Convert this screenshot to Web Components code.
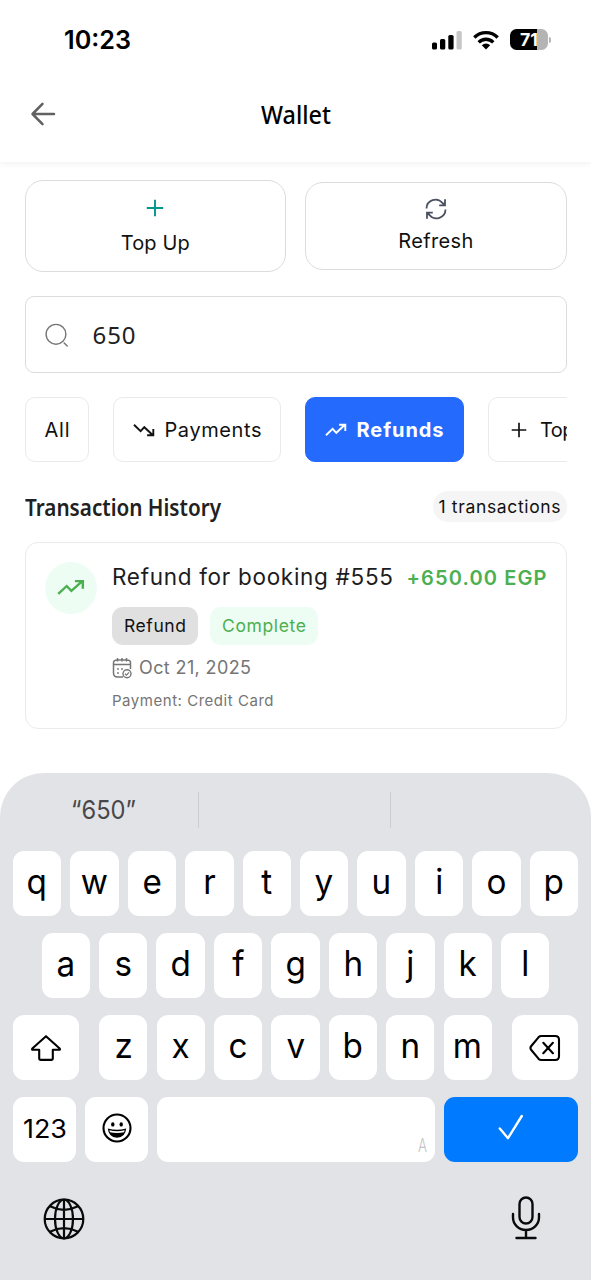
<!DOCTYPE html>
<html lang="en">
<head>
<meta charset="utf-8">
<title>Wallet</title>
<style>
html,body{margin:0;padding:0}
body{width:591px;height:1280px;overflow:hidden;background:#fff;font-family:Inter,"Liberation Sans",sans-serif;color:#111}
</style>
</head>
<body>
<wallet-app></wallet-app>
<script>
const define=(name,html,setup)=>customElements.define(name,class extends HTMLElement{
  constructor(){super();this.attachShadow({mode:'open'});}
  connectedCallback(){
    this.shadowRoot.innerHTML=typeof html==='function'?html(this):html;
    if(setup)setup(this,this.shadowRoot);
  }
});

/* Icon set. Each entry: view box size and drawing. */
const ICONS={
  back:[26,24,'<path d="M24 12H2.500M12.500 1.800L2.500 12l10 10.200" stroke="currentColor" stroke-width="2.500" stroke-linecap="round" stroke-linejoin="round"/>'],
  plus:[18,18,'<path d="M9 .8v16.400M.8 9h16.400" stroke="currentColor" stroke-width="1.900"/>'],
  refresh:[22,22,'<path d="M1.500 10.500A9 9 0 0 1 17.500 5l2.300 2M20 1.300v6h-5.800M20.500 11.500A9 9 0 0 1 4.500 17l-2.300-2M2 20.700v-6h5.800" stroke="currentColor" stroke-width="1.800"/>'],
  search:[24,24,'<circle cx="11" cy="11.300" r="9.900" stroke="currentColor" stroke-width="1.400"/><path d="M19.200 20l3 3" stroke="currentColor" stroke-width="1.400" stroke-linecap="round"/>'],
  down:[22,14,'<path d="M1 1.800l6.600 6.400 3.700-4 8.600 8M20.300 6v6.300h-6.200" stroke="currentColor" stroke-width="1.900"/>'],
  up:[22,14,'<path d="M1 12.200l6.600-6.400 3.700 4 8.600-8M20.300 8V1.700h-6.200" stroke="currentColor" stroke-width="1.900"/>'],
  calendar:[20,22,'<path d="M11 20H5.500Q1.500 20 1.500 16V6Q1.500 3 5 3h10q3.500 0 3.500 3v6M1.500 7.500h17M5.500 1v3.500M10 1v3.500M14.500 1v3.500" stroke="currentColor" stroke-width="1.500"/><circle cx="6" cy="12" r=".9" fill="currentColor"/><circle cx="10" cy="12" r=".9" fill="currentColor"/><circle cx="6" cy="16" r=".9" fill="currentColor"/><circle cx="15" cy="16.700" r="4" stroke="currentColor" stroke-width="1.400"/><path d="M13 16.700l1.500 1.400 2.500-2.700" stroke="currentColor" stroke-width="1.200"/>'],
  shift:[32,28,'<path d="M16 2.200L2.300 14.500q-.8 1.200.7 1.300h6.200v8.500q0 1.600 1.600 1.600h10.400q1.600 0 1.600-1.600v-8.500H29q1.500-.1.700-1.300z" stroke="currentColor" stroke-width="2.100" stroke-linejoin="round"/>'],
  del:[32,28,'<path d="M12.300 2h14q3.700 0 3.700 3.700v16.600q0 3.700-3.700 3.700h-14q-1.500 0-2.600-1.100L2.300 16q-1.700-2 0-4l7.400-8.900Q10.800 2 12.300 2zM14.300 8.800l9.600 10.400M23.900 8.800L14.300 19.200" stroke="currentColor" stroke-width="2.100" stroke-linecap="round" stroke-linejoin="round"/>'],
  smile:[30,30,'<circle cx="15" cy="15" r="13.500" stroke="currentColor" stroke-width="2.100"/><ellipse cx="10.800" cy="11.400" rx="1.700" ry="2.200" fill="currentColor"/><ellipse cx="19.200" cy="11.400" rx="1.700" ry="2.200" fill="currentColor"/><path d="M5.800 15.500q9.200 2.600 18.400 0-.8 9-9.200 9.200-8.400-.2-9.200-9.200z" fill="currentColor"/><path d="M7.400 17.300q7.600 1.700 15.200 0-.1 1-.6 2-7 1.600-14 0-.5-1-.6-2z" fill="#fff"/>'],
  check:[26,26,'<path d="M1.800 14.500l8.200 9.700L23.800 2" stroke="currentColor" stroke-width="2.400" stroke-linecap="round" stroke-linejoin="round"/>'],
  globe:[42,42,'<g stroke="currentColor" stroke-width="2.200"><circle cx="21" cy="21" r="19.300"/><ellipse cx="21" cy="21" rx="9" ry="19.300"/><path d="M21 1.700v38.600M1.700 21h38.600M7 8.300q14 7 28 0M7 33.700q14-7 28 0"/></g>'],
  mic:[30,44,'<g stroke="currentColor" stroke-width="2.400" stroke-linecap="round"><rect x="8.500" y="1.500" width="13" height="26" rx="6.500"/><path d="M2 18v3.500a13 12.500 0 0 0 26 0V18M15 34v7.500M5.500 42h19"/></g>'],
  signal:[30,20,'<g fill="currentColor"><rect x="0" y="12.500" width="5" height="7" rx="1.600"/><rect x="8" y="9" width="5.300" height="10.500" rx="1.600"/><rect x="16.300" y="5" width="5.300" height="14.500" rx="1.600"/><rect x="24.500" y="1" width="5.300" height="18.500" rx="1.600" opacity=".22"/></g>'],
  wifi:[26,20,'<g stroke="currentColor" stroke-width="3.300"><path d="M1.300 7.500a16.500 16.500 0 0 1 23.400 0"/><path d="M5.700 12.300a10.300 10.300 0 0 1 14.600 0"/></g><path d="M13 19.500L8.800 15.300a6 6 0 0 1 8.400 0z" fill="currentColor"/>']
};
define('ui-icon',el=>{
  const [w,h,d]=ICONS[el.getAttribute('name')];
  const width=el.getAttribute('w')||w, height=el.getAttribute('h')||h;
  return `<style>:host{display:block;flex:none;width:${width}px;height:${height}px}svg{display:block}</style>
  <svg width="${width}" height="${height}" viewBox="0 0 ${w} ${h}" fill="none" preserveAspectRatio="none">${d}</svg>`;
});

/* One line of text set to a fixed measure: tracked out by default, scaled with the "scale" attribute. */
define('fit-text',el=>`<style>:host{display:block;flex:none;white-space:nowrap;line-height:1;width:${el.getAttribute('w')}px}
  span{display:inline-block;transform-origin:0 50%;white-space:nowrap}</style><span><slot></slot></span>`,
(el,root)=>{
  const s=root.querySelector('span'),target=+el.getAttribute('w'),natural=s.getBoundingClientRect().width;
  if(el.hasAttribute('scale'))s.style.transform=`scaleX(${target/natural})`;
  else{const n=el.textContent.length;s.style.letterSpacing=(target-natural)/(n-1)+'px';}
});

define('status-bar',`<style>
  :host{display:flex;height:78px;box-sizing:border-box;padding:0 40px 0 63.500px;align-items:center;justify-content:space-between;color:#000}
  .time{font-size:25px;font-weight:600;margin-top:2px}
  .right{display:flex;align-items:center;margin-top:1px}
  ui-icon[name=wifi]{margin:0 11px 0 11px}
  .bat{width:38px;height:21px;border-radius:6.500px;background:linear-gradient(90deg,#000 71%,#b4b4b4 71%);color:#fff;font-size:18px;font-weight:700;display:flex;justify-content:center;align-items:center}
  .cap{width:2px;height:6px;border-radius:0 2px 2px 0;background:#b4b4b4;margin-left:1px}
</style><fit-text class="time" w="67" scale>10:23</fit-text>
<div class="right"><ui-icon name="signal"></ui-icon><ui-icon name="wifi"></ui-icon><div class="bat"><fit-text w="18" scale>71</fit-text></div><div class="cap"></div></div>`);

define('app-header',`<style>
  :host{display:grid;grid-template-columns:1fr auto 1fr;height:84px;box-sizing:border-box;padding:0 30px;align-items:center;box-shadow:0 2px 6px rgba(0,0,0,.055);clip-path:inset(0 0 -12px 0);background:#fff}
  ui-icon{color:#616161;margin-bottom:12px}
  .t{font:500 26px "Noto Sans",sans-serif;line-height:1;color:#000;margin-bottom:13px}
</style><ui-icon name="back"></ui-icon><fit-text class="t" w="70" scale><slot></slot></fit-text>`);

define('action-button',el=>`<style>
  :host{display:flex;flex-direction:column;align-items:center;box-sizing:border-box;border:1px solid #dcdcdc;border-radius:18px;height:${el.getAttribute('h')}px;padding-top:${el.getAttribute('pad')}px;background:#fff}
  .i{height:24px;display:flex;align-items:center;color:${el.getAttribute('tint')}}
  .t{height:24px;line-height:24px;font-size:20px;margin-top:${el.getAttribute('gap')}px}
</style><div class="i"><ui-icon name="${el.getAttribute('icon')}"></ui-icon></div><fit-text class="t" w="${el.getAttribute('w')}">${el.textContent}</fit-text>`);

define('search-field',el=>`<style>
  :host{display:flex;align-items:center;box-sizing:border-box;height:77px;border:1px solid #dcdcdc;border-radius:9px;padding-left:19px;gap:24px}
  ui-icon{color:#757575}
  .t{font:400 24px "Noto Sans",sans-serif;line-height:1;color:#212121}
</style><ui-icon name="search"></ui-icon><fit-text class="t" w="43">${el.textContent}</fit-text>`);

define('filter-chip',el=>{
  const on=el.hasAttribute('selected'),ic=el.getAttribute('icon');
  return `<style>
  :host{display:flex;flex:none;align-items:center;box-sizing:border-box;width:${el.getAttribute('box')}px;height:65px;border-radius:10px;border:1px solid ${on?'#246bfd':'#eaeaea'};background:${on?'#246bfd':'#fff'};color:${on?'#fff':'#111'};padding-left:${el.getAttribute('pad')}px;font-size:20px;font-weight:${on?700:400};gap:${el.getAttribute('gap')||9.5}px}
</style>${ic?`<ui-icon name="${ic}" ${ic==='plus'?'w="16" h="16"':''}></ui-icon>`:''}<fit-text w="${el.getAttribute('w')}">${el.textContent}</fit-text>`});

define('section-head',`<style>
  :host{display:flex;justify-content:space-between;align-items:center;height:31px}
  .h{font:600 23px "Noto Sans",sans-serif;line-height:1;color:#212121;margin-top:2px}
  .b{display:flex;align-items:center;justify-content:center;width:134px;height:31px;border-radius:15px;background:#f5f5f5;font-size:17.500px;box-sizing:border-box;padding-top:2px}
</style><fit-text class="h" w="196" scale>Transaction History</fit-text><div class="b"><fit-text w="122">1 transactions</fit-text></div>`);

define('transaction-card',`<style>
  :host{display:flex;box-sizing:border-box;height:187px;border:1px solid #ebebeb;border-radius:13px;padding:19px 19px 0 19px;gap:15.500px}
  .c{width:52px;height:52px;border-radius:50%;background:#edfdf3;color:#4caf50;display:flex;align-items:center;justify-content:center;flex:none}
  .body{flex:1}
  .top{display:flex;justify-content:space-between;align-items:center;height:32px}
  .t{font-size:22.500px;color:#1c1c1e}
  .amt{font-size:20px;font-weight:600;color:#4caf50}
  .pills{display:flex;gap:12px;margin-top:13px}
  .p{height:38px;border-radius:11px;background:#e0e0e0;display:flex;align-items:center;justify-content:center;font-size:17.500px;width:86px}
  .ok{background:#edfdf3;color:#4caf50;width:108px}
  .date{display:flex;align-items:center;gap:7px;color:#757575;font-size:18px;height:24px;margin-top:11px}
  .pay{font-size:15px;color:#757575;margin-top:13px}
</style><div class="c"><ui-icon name="up" w="28" h="17"></ui-icon></div>
<div class="body"><div class="top"><fit-text class="t" w="281">Refund for booking #555</fit-text><fit-text class="amt" w="140">+650.00 EGP</fit-text></div>
<div class="pills"><div class="p"><fit-text w="62">Refund</fit-text></div><div class="p ok"><fit-text w="84">Complete</fit-text></div></div>
<div class="date"><ui-icon name="calendar"></ui-icon><fit-text w="112">Oct 21, 2025</fit-text></div>
<fit-text class="pay" w="161.5">Payment: Credit Card</fit-text></div>`);

define('key-cap',el=>`<style>
  :host{display:flex;align-items:center;justify-content:center;box-sizing:border-box;height:65px;width:${el.getAttribute('w')||48.300}px;flex:none;border-radius:11px;background:#fff;color:#000;font-size:35px;line-height:1;padding-bottom:5px}
  span{transform:scaleX(.95)}
  :host([flat]){padding-bottom:0}
  :host([face]){padding-bottom:3px}
  :host([primary]){background:#007aff;color:#fff;padding-bottom:5px}
  :host([small]){font-size:26px;padding-bottom:2px}
  :host([space]){justify-content:flex-end;align-items:flex-end;padding:0 8px 7px 0;font:300 19px Inter,sans-serif;line-height:1;color:#c2c2c6}
</style>${el.hasAttribute('w')?'<slot></slot>':'<span><slot></slot></span>'}`);

const keys=s=>[...s].map(k=>`<key-cap>${k}</key-cap>`).join('');
define('key-board',`<style>
  :host{display:block;box-sizing:border-box;height:507px;background:#e2e3e7;border-radius:44px 44px 0 0;padding:0 13px}
  .sug{display:grid;grid-template-columns:185px 192px 1fr;height:36px;padding-top:19px;color:#48484a;font-size:26px}
  .sug>div{display:flex;align-items:center}
  .sug>div+div{border-left:1px solid #cbccd0}
  .sug fit-text{margin-left:58px}
  .row{display:flex;justify-content:space-between;margin-top:17px}
  .r1{margin-top:23px}
  .r2{padding:0 28.500px}
  .mid{display:flex;gap:9.100px}
  .tools{display:flex;justify-content:space-between;padding:34px 37px 0 30px;color:#0a0a0a}
  ui-icon[name=globe]{margin-top:2px}
</style>
<div class="sug"><div><fit-text w="65" scale>“650”</fit-text></div><div></div><div></div></div>
<div class="row r1">${keys('qwertyuiop')}</div>
<div class="row r2">${keys('asdfghjkl')}</div>
<div class="row"><key-cap w="65.500" flat><ui-icon name="shift"></ui-icon></key-cap><div class="mid">${keys('zxcvbnm')}</div><key-cap w="65.500" flat><ui-icon name="del"></ui-icon></key-cap></div>
<div class="row"><key-cap w="63" small><fit-text w="44" scale>123</fit-text></key-cap><key-cap w="63" flat face><ui-icon name="smile"></ui-icon></key-cap><key-cap w="277.500" space><fit-text w="9" scale>A</fit-text></key-cap><key-cap w="134.500" primary><ui-icon name="check"></ui-icon></key-cap></div>
<div class="tools"><ui-icon name="globe"></ui-icon><ui-icon name="mic"></ui-icon></div>`);

define('wallet-app',`<style>
  :host{display:flex;flex-direction:column;height:1280px;width:591px}
  main{padding:18px 24.500px 0;flex:1}
  .actions{display:grid;grid-template-columns:1fr 1fr;gap:19px;align-items:center}
  search-field{margin-top:24px}
  .chips{display:flex;gap:24px;overflow:hidden;margin-top:24px}
  section-head{margin-top:28.500px}
  transaction-card{margin-top:20px}
</style>
<status-bar></status-bar><app-header>Wallet</app-header>
<main>
<div class="actions"><action-button icon="plus" tint="#009688" h="92" pad="15" gap="11" w="69">Top Up</action-button><action-button icon="refresh" tint="#4a5060" h="88" pad="14" gap="8" w="75">Refresh</action-button></div>
<search-field>650</search-field>
<div class="chips"><filter-chip box="64.500" pad="19" w="25">All</filter-chip><filter-chip icon="down" box="167.500" pad="19" w="97">Payments</filter-chip><filter-chip selected icon="up" box="159" pad="19.5" w="87">Refunds</filter-chip><filter-chip icon="plus" box="150" pad="22" gap="13.5" w="76">Top Ups</filter-chip></div>
<section-head></section-head>
<transaction-card></transaction-card>
</main>
<key-board></key-board>`);
</script>
</body>
</html>
